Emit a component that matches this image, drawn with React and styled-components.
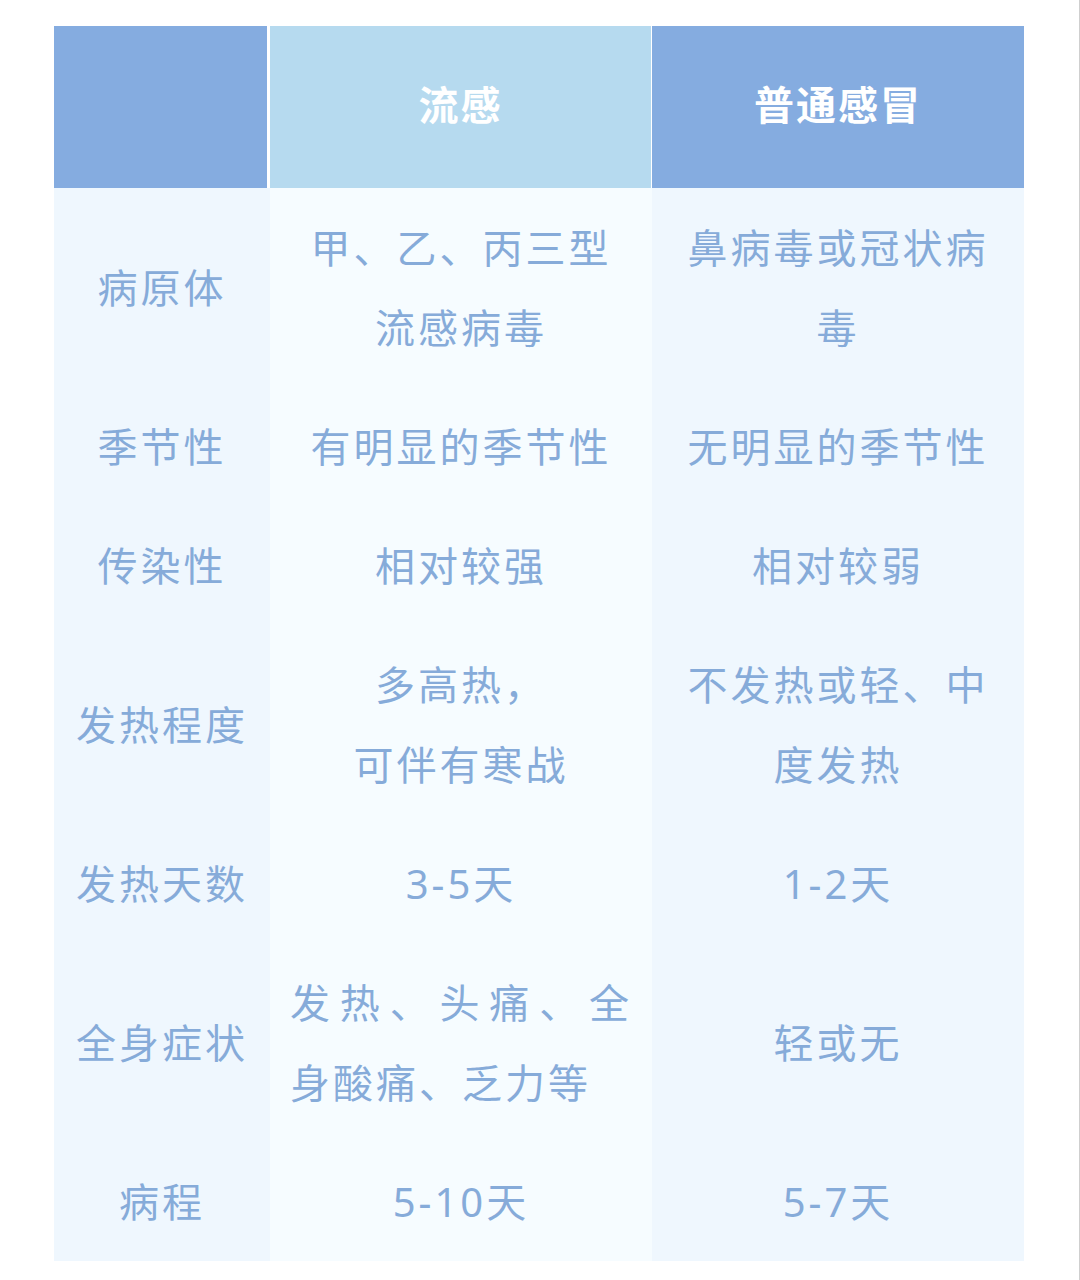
import React from 'react';
import styled, { createGlobalStyle } from 'styled-components';

const GlobalStyle = createGlobalStyle`
  html, body {
    margin: 0;
    padding: 0;
    background: #ffffff;
  }
  body {
    font-family: "Noto Sans", "Noto Sans CJK SC", sans-serif;
  }
`

const Page = styled.div`
  box-sizing: border-box;
  width: 1080px;
  min-height: 1280px;
  padding: 26px 0 0 54px;
  border-right: 1px solid #cfcfcf;
`

const Table = styled.div`
  display: grid;
  grid-template-columns: 216px 382px 372px;
  width: 970px;
`

const HeadCell = styled.div`
  box-sizing: border-box;
  height: 162px;
  padding-bottom: 8px;
  display: flex;
  align-items: center;
  justify-content: center;
  background: ${p => p.$light ? '#b6daef' : '#85ace0'};
  border-right: ${p => p.$gap}px solid #ffffff;
  color: #ffffff;
  font-family: "Noto Sans CJK SC", sans-serif;
  font-size: 40px;
  font-weight: 700;
  letter-spacing: 2px;
`

const Cell = styled.div`
  box-sizing: border-box;
  display: flex;
  align-items: center;
  justify-content: center;
  padding: 19.5px 20px;
  background: ${p => p.$light ? '#f6fcff' : '#eff7fe'};
  color: #86abd9;
  font-family: "Noto Sans", "Noto Sans CJK SC", sans-serif;
  font-size: 40px;
  line-height: 80px;
  letter-spacing: 3px;
  text-align: ${p => p.$justify ? 'justify' : 'center'};
`

const CellText = styled.div`
  width: ${p => p.$justify ? '100%' : 'auto'};
`

const rows = [
  ['病原体', '甲、乙、丙三型流感病毒', '鼻病毒或冠状病毒'],
  ['季节性', '有明显的季节性', '无明显的季节性'],
  ['传染性', '相对较强', '相对较弱'],
  ['发热程度', <>多高热，<br />可伴有寒战</>, '不发热或轻、中度发热'],
  ['发热天数', '3-5天', '1-2天'],
  ['全身症状', '发热、头痛、全身酸痛、乏力等', '轻或无', true],
  ['病程', '5-10天', '5-7天'],
];

const App = () => (
  <>
    <GlobalStyle />
    <Page>
      <Table>
        <HeadCell $gap={3}></HeadCell>
        <HeadCell $light $gap={1}>流感</HeadCell>
        <HeadCell $gap={0}>普通感冒</HeadCell>
        {rows.map(([name, flu, cold, justify]) => (
          <React.Fragment key={name}>
            <Cell><CellText>{name}</CellText></Cell>
            <Cell $light $justify={justify}>
              <CellText $justify={justify}>{flu}</CellText>
            </Cell>
            <Cell><CellText>{cold}</CellText></Cell>
          </React.Fragment>
        ))}
      </Table>
    </Page>
  </>
);

export default App;
